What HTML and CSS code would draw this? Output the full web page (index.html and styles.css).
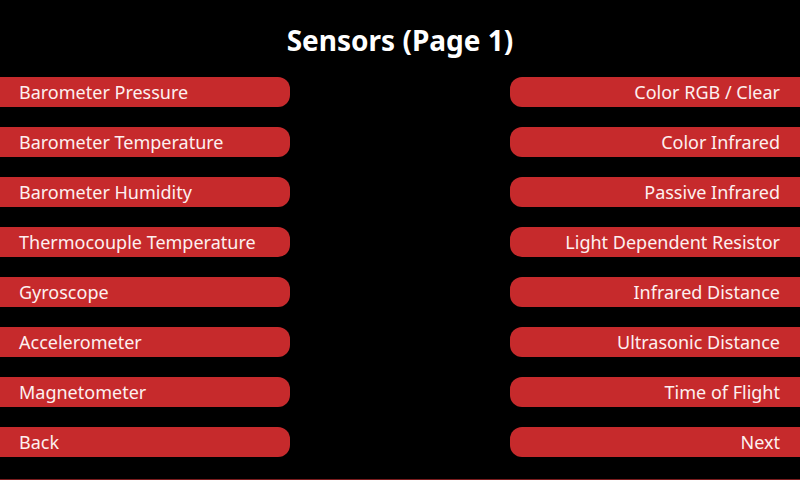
FILE: index.html
```html
<!DOCTYPE html>
<html>
<head>
<meta charset="utf-8">
<link rel="stylesheet" href="styles.css">
</head>
<body>
<div class="screen">
  <header class="header"><h1 class="title">Sensors (Page 1)</h1></header>
  <main class="grid">
    <div class="col left">
      <div class="btn">Barometer Pressure</div>
      <div class="btn">Barometer Temperature</div>
      <div class="btn">Barometer Humidity</div>
      <div class="btn">Thermocouple Temperature</div>
      <div class="btn">Gyroscope</div>
      <div class="btn">Accelerometer</div>
      <div class="btn">Magnetometer</div>
      <div class="btn">Back</div>
    </div>
    <div class="col right">
      <div class="btn">Color RGB / Clear</div>
      <div class="btn">Color Infrared</div>
      <div class="btn">Passive Infrared</div>
      <div class="btn">Light Dependent Resistor</div>
      <div class="btn">Infrared Distance</div>
      <div class="btn">Ultrasonic Distance</div>
      <div class="btn">Time of Flight</div>
      <div class="btn">Next</div>
    </div>
  </main>
  <div class="bottom-line"></div>
</div>
</body>
</html>
```
FILE: styles.css
```css
html, body {
  margin: 0;
  padding: 0;
  background: #000;
}
.screen {
  width: 800px;
  height: 480px;
  display: flex;
  flex-direction: column;
  font-family: "Noto Sans", "Open Sans", sans-serif;
  color: #fff;
  overflow: hidden;
}
.header {
  height: 77px;
  box-sizing: border-box;
  padding-top: 21px;
}
.title {
  margin: 0;
  font-size: 28px;
  font-weight: 700;
  line-height: 38px;
  text-align: center;
}
.grid {
  display: flex;
  justify-content: space-between;
  flex: 1;
}
.col {
  width: 290px;
  display: flex;
  flex-direction: column;
  gap: 20px;
}
.btn {
  height: 30px;
  background: #c62a2c;
  color: #fdf0f0;
  font-size: 18px;
  display: flex;
  align-items: center;
  white-space: nowrap;
}
.left .btn {
  padding-left: 19px;
  border-radius: 0 12px 12px 0;
}
.right .btn {
  padding-right: 20px;
  justify-content: flex-end;
  border-radius: 12px 0 0 12px;
}
.bottom-line {
  height: 1px;
  background: #7a1c1e;
}
```
